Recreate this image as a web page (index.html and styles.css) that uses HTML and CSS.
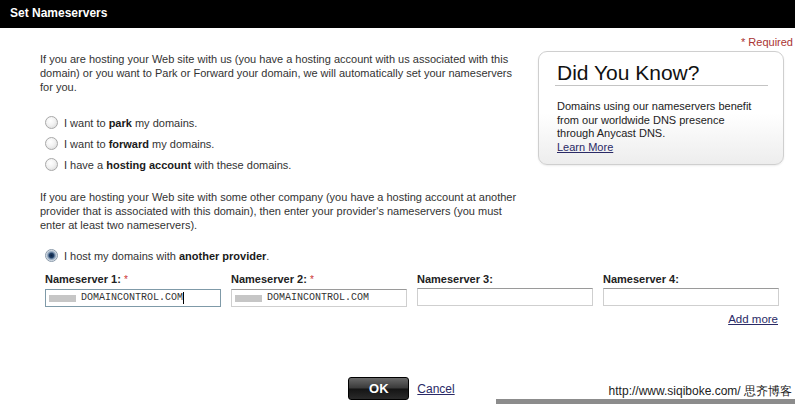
FILE: index.html
```html
<!DOCTYPE html>
<html lang="en">
<head>
    <meta charset="UTF-8">
    <meta name="viewport" content="width=device-width, initial-scale=1.0">
    <title>Set Nameservers</title>
    <link rel="stylesheet" href="styles.css">
</head>
<body>
    <div class="titlebar">Set Nameservers</div>

    <div class="content">
        <div class="required">* Required</div>

        <div class="top">
            <div class="intro">
                <p>If you are hosting your Web site with us (you have a hosting account with us associated with this domain) or you want to Park or Forward your domain, we will automatically set your nameservers for you.</p>

                <div class="options">
                    <div class="option"><span class="radio"></span><span>I want to <b>park</b> my domains.</span></div>
                    <div class="option"><span class="radio"></span><span>I want to <b>forward</b> my domains.</span></div>
                    <div class="option"><span class="radio"></span><span>I have a <b>hosting account</b> with these domains.</span></div>
                </div>

                <p class="other">If you are hosting your Web site with some other company (you have a hosting account at another provider that is associated with this domain), then enter your provider's nameservers (you must enter at least two nameservers).</p>

                <div class="option selected"><span class="radio checked"></span><span>I host my domains with <b>another provider</b>.</span></div>
            </div>

            <aside class="tip">
                <h2>Did You Know?</h2>
                <p>Domains using our nameservers benefit from our worldwide DNS presence through Anycast DNS.<br>
                <a href="#">Learn More</a></p>
            </aside>
        </div>

        <div class="servers">
            <div class="server">
                <label>Nameserver 1: <span class="star">*</span></label>
                <div class="field focus"><span class="hidden-part"></span>DOMAINCONTROL.COM<span class="caret"></span></div>
            </div>
            <div class="server">
                <label>Nameserver 2: <span class="star">*</span></label>
                <div class="field"><span class="hidden-part"></span>DOMAINCONTROL.COM</div>
            </div>
            <div class="server">
                <label>Nameserver 3:</label>
                <div class="field"></div>
            </div>
            <div class="server">
                <label>Nameserver 4:</label>
                <div class="field"></div>
            </div>
        </div>

        <div class="more"><a href="#">Add more</a></div>

        <div class="actions">
            <button class="ok">OK</button>
            <a href="#" class="cancel">Cancel</a>
        </div>
    </div>

    <div class="watermark">http://www.siqiboke.com/ 思齐博客</div>
    <div class="bottom-bar"></div>
</body>
</html>
```

FILE: styles.css
```css
html, body {
    height: 100%;
}
body {
    margin: 0;
    position: relative;
    overflow: hidden;
    font-family: "Liberation Sans", Arial, sans-serif;
    font-size: 11px;
    line-height: 14px;
    color: #333;
    background-color: #fff;
}
b {
    color: #1a1a1a;
}
a {
    color: #2a2a66;
}
.titlebar {
    height: 28px;
    background-color: #000;
    color: #fff;
    font-weight: bold;
    font-size: 12px;
    line-height: 26px;
    padding-left: 10px;
}
.content {
    padding-left: 40px;
}
.required {
    text-align: right;
    color: #a33;
    margin-top: 7px;
    padding-right: 2px;
}
.top {
    display: flex;
    margin-top: 2px;
}
.intro {
    width: 482px;
    padding-top: 1px;
}
.intro p {
    margin: 0;
}
.options {
    margin-top: 18px;
}
.option {
    display: flex;
    align-items: center;
    height: 21px;
    padding-left: 5px;
}
.radio {
    width: 11px;
    height: 11px;
    border: 1px solid #a8a8a8;
    border-radius: 50%;
    margin-right: 6px;
    background: radial-gradient(circle at 40% 35%, #fff 0%, #f2f2f2 45%, #d4d4d4 100%);
}
.radio.checked {
    border-color: #8a9aaa;
    background: radial-gradient(circle at 50% 50%, #0d2240 0%, #1f3e66 28%, #7d95b0 45%, #e2e8ee 70%, #c8d0d8 100%);
}
.other {
    margin-top: 15px !important;
}
.selected {
    margin-top: 13px;
}
.tip {
    width: 213px;
    height: 103px;
    margin-left: 16px;
    padding: 9px 15px 0 16px;
    border: 1px solid #cfcfcf;
    border-radius: 9px;
    background: linear-gradient(#fff 55%, #ededed);
    box-shadow: 0 1px 2px rgba(0, 0, 0, 0.08);
}
.tip h2 {
    margin: 0;
    padding-left: 2px;
    font-size: 21px;
    font-weight: normal;
    line-height: 24px;
    color: #111;
    border-bottom: 1px solid #c4c4c4;
}
.tip p {
    width: 198px;
    margin: 14px 0 0;
    padding-left: 2px;
    line-height: 13.5px;
    color: #222;
}
.servers {
    display: grid;
    grid-template-columns: repeat(4, 176px);
    column-gap: 10px;
    margin-top: 6px;
    padding-left: 5px;
}
.server label {
    display: block;
    font-weight: bold;
    color: #222;
    margin-bottom: 2px;
}
.star {
    color: #c33;
    font-weight: normal;
    font-size: 10px;
}
.field {
    height: 16px;
    border: 1px solid #cfcfcf;
    border-top-color: #9a9a9a;
    display: flex;
    align-items: center;
    padding-left: 3px;
    font-family: "Liberation Mono", monospace;
    font-size: 10px;
    color: #333;
}
.field.focus {
    border-color: #7f9aa8;
}
.hidden-part {
    width: 27px;
    height: 7px;
    background-color: #c6c6c6;
    margin-right: 5px;
}
.caret {
    width: 1px;
    height: 12px;
    background-color: #000;
}
.more {
    width: 738px;
    text-align: right;
    margin-top: 5px;
    font-size: 11.5px;
}
.actions {
    display: flex;
    align-items: center;
    justify-content: center;
    gap: 8px;
    margin-top: 51px;
    padding-right: 32px;
}
.ok {
    width: 61px;
    height: 23px;
    border: 1px solid #000;
    border-radius: 3px;
    background: linear-gradient(#6a6a6a, #3a3a3a 48%, #141414 52%, #2a2a2a);
    color: #fff;
    font-family: "Liberation Sans", Arial, sans-serif;
    font-weight: bold;
    font-size: 13px;
    padding: 0;
}
.cancel {
    font-size: 12px;
}
.watermark {
    position: absolute;
    right: 3px;
    bottom: 6px;
    font-size: 12px;
    line-height: 14px;
    color: #222;
}
.bottom-bar {
    position: absolute;
    left: 496px;
    right: 0;
    bottom: 0;
    height: 5px;
    background-color: #8c8c8c;
}
```
